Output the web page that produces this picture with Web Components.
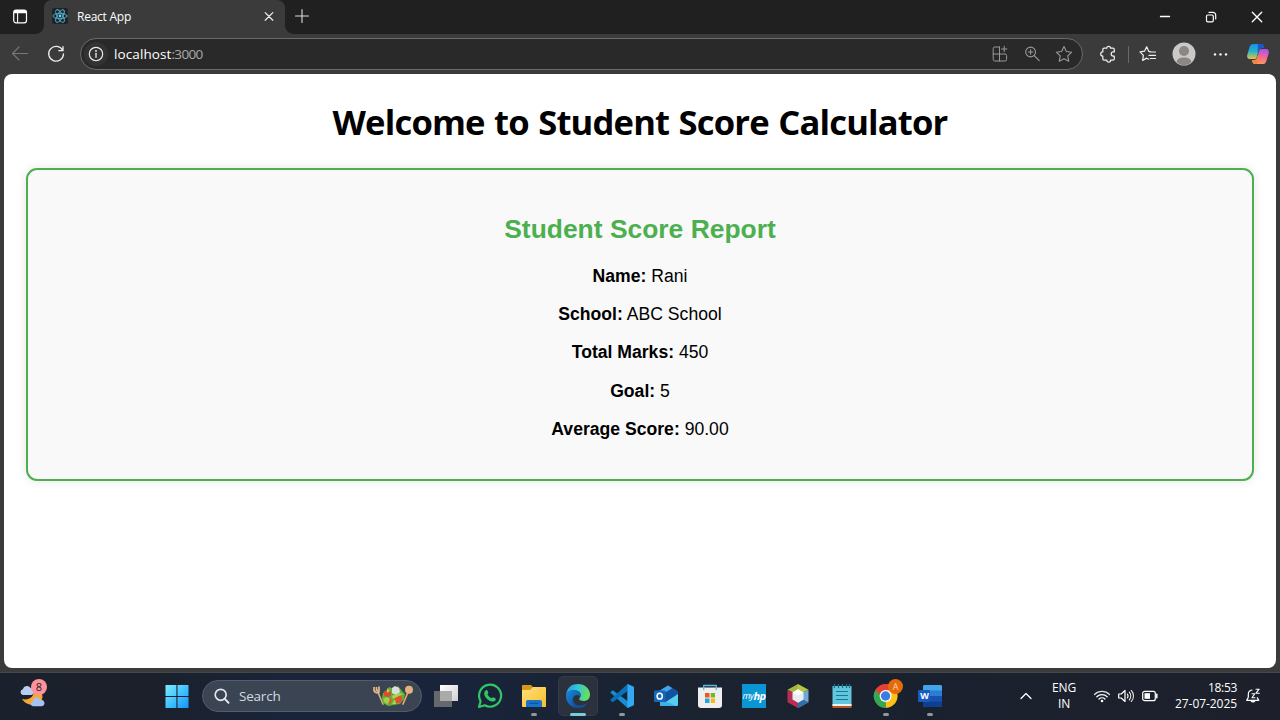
<!DOCTYPE html>
<html lang="en">
<head>
<meta charset="utf-8">
<title>React App</title>
<style>
html,body{margin:0;height:100%;overflow:hidden;background:#3b3b3b}
body{font-family:"Open Sans","Noto Sans",sans-serif}
</style>
</head>
<body>
<desktop-screen></desktop-screen>
<script>
const define = (name, html, setup) => customElements.define(name, class extends HTMLElement {
  connectedCallback() {
    if (this.shadowRoot) return;
    this.attachShadow({mode: "open"}).innerHTML = typeof html === "function" ? html(this) : html;
    if (setup) setup(this);
  }
});

const box = (s, body) => `<svg width="${s}" height="${s}" viewBox="0 0 ${s} ${s}" fill="none" stroke-linecap="round" stroke-linejoin="round">${body}</svg>`;
const star = "M10 2.6l2.35 4.9 5.35.7-3.9 3.75.95 5.35L10 14.7l-4.75 2.6.95-5.35L2.3 8.2l5.35-.7z";
const icons = {
  tabs: box(20, `<rect x="3.7" y="3" width="12.8" height="12.8" rx="2.3" stroke="#fff" stroke-width="1.2"/><path d="M4 4.8q0-1.8 2-1.8h8.3q2 0 2 1.8v1.5H4z" fill="#fff"/><path d="M7.6 6v9.5" stroke="#fff" stroke-width="1.1"/>`),
  react: box(16, `<rect width="16" height="16" rx="2" fill="#20232a"/><g stroke="#52b5cf" stroke-width=".9"><ellipse cx="8" cy="8" rx="7" ry="2.7"/><ellipse cx="8" cy="8" rx="7" ry="2.7" transform="rotate(60 8 8)"/><ellipse cx="8" cy="8" rx="7" ry="2.7" transform="rotate(120 8 8)"/></g><circle cx="8" cy="8" r="1.4" fill="#61dafb"/>`),
  close: box(10, `<path d="M1.2 1.6l7.6 7.6m0-7.6L1.2 9.2" stroke="#eee" stroke-width="1.25"/>`),
  plus: box(16, `<path d="M8 1.5v13M1.5 8h13" stroke="#ddd" stroke-width="1.1"/>`),
  min: box(12, `<path d="M1.5 5.5h9" stroke="#fff" stroke-width="1.3"/>`),
  restore: box(12, `<rect x="1.5" y="4" width="6.8" height="6.8" rx="1.3" stroke="#fff" stroke-width="1.2"/><path d="M4 1.3h4a2.7 2.7 0 0 1 2.7 2.7v4" stroke="#fff" stroke-width="1.2"/>`),
  wclose: box(12, `<path d="M1.3 1.3l9.4 9.4m0-9.4l-9.4 9.4" stroke="#fff" stroke-width="1.35"/>`),
  back: box(20, `<path d="M17.5 9.5H2.7M9 3L2.5 9.5 9 16" stroke="#777" stroke-width="1.1"/>`),
  reload: box(20, `<path d="M16.6 6.2A7.4 7.4 0 1 0 17.5 10M17 2.7v4h-4.2" stroke="#eee" stroke-width="1.3"/>`),
  info: box(28, `<circle cx="14" cy="14" r="12" fill="#333"/><circle cx="14" cy="14" r="6.7" stroke="#eee" stroke-width="1.15"/><path d="M14 13.3v4" stroke="#eee" stroke-width="1.3"/><circle cx="14" cy="11" r=".9" fill="#eee"/>`),
  apps: box(20, `<path d="M9.5 3H4.8A1.6 1.6 0 0 0 3.2 4.6v10.8A1.6 1.6 0 0 0 4.8 17H15a1.6 1.6 0 0 0 1.6-1.6v-3.8a1.6 1.6 0 0 0-1.6-1.6H3.2M9.5 3v14M14.2 2.3v5.4M11.5 5h5.4" stroke="#999" stroke-width="1"/>`),
  zoom: box(20, `<circle cx="8.6" cy="8" r="4.9" stroke="#999" stroke-width="1.1"/><path d="M12.2 11.6l5 5M8.6 5.8v4.4M6.4 8h4.4" stroke="#999" stroke-width="1.1"/>`),
  star: box(20, `<path d="${star}" stroke="#999" stroke-width="1.1"/>`),
  puzzle: box(20, `<path d="M6.2 4.2h2.6a1.9 1.9 0 0 1 3.8 0h2.3a1.4 1.4 0 0 1 1.4 1.4v2.3h-1a2 2 0 1 0 0 4.2h1v2.7a1.4 1.4 0 0 1-1.4 1.4h-2.3a1.9 1.9 0 0 1-3.8 0H6.2a1.4 1.4 0 0 1-1.4-1.4v-2.7a2.1 2.1 0 0 1 0-4.2V5.6a1.4 1.4 0 0 1 1.4-1.4z" stroke="#eee" stroke-width="1.25"/>`),
  favs: box(20, `<path d="M12.4 7.5h-1.6L8.7 2.7 6.5 7.2l-4.5.7 3.4 3.5-.8 5 4.2-2.3M12 8h5.5M11 11.4h6.5M12.3 14.5h5.2M8.7 14.2l2 1" stroke="#eee" stroke-width="1.2"/>`),
  person: box(24, `<circle cx="12" cy="12" r="11.5" fill="#cbc8c5"/><circle cx="12" cy="9" r="5" fill="#8a8785"/><path d="M4.7 20.6c0-3.5 2.5-5 7.3-5s7.3 1.5 7.3 5a11.5 11.5 0 0 1-14.6 0z" fill="#8a8785"/>`),
  dots: box(16, `<g fill="#fff"><circle cx="3" cy="8.4" r="1.2"/><circle cx="8.5" cy="8.4" r="1.2"/><circle cx="14" cy="8.4" r="1.2"/></g>`),
  copilot: box(24, `<defs><linearGradient id="a" x1="0" y1="0" x2="0" y2="1"><stop stop-color="#188eea"/><stop offset=".5" stop-color="#25b6c6"/><stop offset="1" stop-color="#e8c13f"/></linearGradient><linearGradient id="b" x1=".3" y1="0" x2=".2" y2="1"><stop stop-color="#a755ed"/><stop offset=".5" stop-color="#f46792"/><stop offset="1" stop-color="#ff9b55"/></linearGradient></defs><path d="M7 2h8c2 0 2.5 1.5 2.9 4h-2.3c-1.6 0-2.2.8-2.8 2.5l-2 6.5c-.5 1.7-1.3 2-3.2 2H4C1.5 17 .7 15 1.3 12.7l2.3-7.6C4.3 3 5.2 2 7 2z" fill="url(#a)"/><path d="M17 22H9c-2 0-2.5-1.5-2.9-4h2.3c1.6 0 2.2-.8 2.8-2.5l2-6.5c.5-1.7 1.3-2 3.2-2H20c2.5 0 3.3 2 2.7 4.3l-2.3 7.6C19.7 21 18.8 22 17 22z" fill="url(#b)"/><path d="M12 2h3c2 0 2.5 1.5 2.9 4h-2.3c-1.6 0-2.2.8-2.8 2.5L11.6 12z" fill="#1b57cf"/><path d="M6.1 18c.4 2.5.9 4 2.9 4h2l2.3-7-1.2-2-.9 2.5C10.6 17.2 10 18 8.4 18z" fill="#ef8743"/>`),
  weather: box(32, `<path d="M18 9c8 1 10 7 7.5 11.5S12 28 6 19c6 1.5 12.5-1 12-10z" fill="#f8a532"/><path d="M6.8 15a3 3 0 0 1 0-5.8A4.3 4.3 0 0 1 14.6 8a3.6 3.6 0 0 1 1 7z" fill="#b9cdf3"/><path d="M17 26.3a2.7 2.7 0 0 1 0-5.3 3.9 3.9 0 0 1 7.4-1.2 3.3 3.3 0 0 1 1.4 6.5z" fill="#a8c2ef"/>`),
  windows: box(26, `<defs><linearGradient id="w" gradientUnits="userSpaceOnUse" x1="1" y1="1" x2="25" y2="25"><stop stop-color="#80edff"/><stop offset=".5" stop-color="#42c5ff"/><stop offset="1" stop-color="#1591f6"/></linearGradient></defs><path d="M1.5 2h10.9v10.9H1.5zM13.5 2h11v10.9h-11zM1.5 14.1h10.9v11H1.5zM13.5 14.1h11v11h-11z" fill="url(#w)"/>`),
  search: box(20, `<circle cx="8.7" cy="8.8" r="5.5" stroke="#e1e5ed" stroke-width="1.7"/><path d="M12.8 12.9l3.7 3.8" stroke="#e1e5ed" stroke-width="2"/>`),
  salad: `<svg width="42" height="22" viewBox="0 0 42 22"><g stroke="#dca877" stroke-width="1.7" stroke-linecap="round"><path d="M5 5l6 14"/><path d="M37 5l-6 14"/></g><path d="M2 2v3.500q2 3.500 5 1.500V1.500M4.500 2v4" fill="none" stroke="#e6b88a" stroke-width="1.700"/><ellipse cx="37" cy="4.8" rx="4" ry="4" fill="#e4b27e"/><path d="M11 8l4-3 2-3 5 2 4-3 4 5 3 3-1 5-4 5-6 1-6 1-5-3-1-5z" fill="#62b334"/><circle cx="15.5" cy="8.5" r="3.6" fill="#dd4932"/><circle cx="26" cy="14" r="4.3" fill="#df5037"/><circle cx="17" cy="15.7" r="2.8" fill="#e2573b"/><path d="M20 3l3-2 4 2 1 4-4 3-4-2z" fill="#dedbe8"/><path d="M11 14l4-2 3 2-2 5-3-1z" fill="#9bd34b"/><path d="M20 11l7-3 4 1-4 2-6 3zM15 3l3 3-3 2zM20 19l3-5 1 5z" fill="#a6d84a"/></svg>`,
  task: box(28, `<defs><linearGradient id="t" x1="0" y1="0" x2="1" y2="1"><stop stop-color="#fff"/><stop offset="1" stop-color="#cfcfd2"/></linearGradient></defs><path d="M8 3h18v16H8z" fill="url(#t)"/><path d="M2 9h18v16H2z" fill="#777" opacity=".82"/><path d="M8 9h12v10H8z" fill="#aaa"/>`),
  whatsapp: box(28, `<path d="M3 25l1.6-5.8A11 11 0 1 1 8.8 23.3z" stroke="#30c765" stroke-width="2.2"/><path d="M10 8.2c.6-.5 1.2-.3 1.5.4l.8 1.9c.2.5 0 .8-.9 1.8 1 1.9 2.4 3.2 4.3 4 .7-.8 1-1.2 1.5-1l2.3 1.1c1 .7-.3 3.2-2.6 3.2-4.4 0-9-5.1-8.7-8.4.1-1.4.9-2.3 1.8-3z" fill="#30c765"/>`),
  folder: box(28, `<defs><linearGradient id="g" x1="0" y1="0" x2="1" y2="1"><stop stop-color="#ffe07a"/><stop offset="1" stop-color="#f8bd2c"/></linearGradient></defs><path d="M2 4c0-.7.5-1 1-1h8l2 2H12l-2 4H2z" fill="#d99816"/><path d="M2 8h8l2.5-3H25a1 1 0 0 1 1 1v19H3a1 1 0 0 1-1-1z" fill="url(#g)"/><path d="M6 25v-5c0-1.5 1-2 2-2h12c1.3 0 2 .7 2 2v5z" fill="#1874c8"/><path d="M9.8 21.3h8.5" stroke="#0a4f98"/>`),
  edge: box(28, `<defs><linearGradient id="e" x1="0" y1="0" x2="1" y2=".2"><stop stop-color="#2593df"/><stop offset=".5" stop-color="#33c4d4"/><stop offset="1" stop-color="#67df62"/></linearGradient><linearGradient id="f" x1="0" y1="0" x2="1" y2="1"><stop stop-color="#1688df"/><stop offset="1" stop-color="#104a8f"/></linearGradient></defs><path d="M2 13C3 5 8 2 14 2c7 0 12 5 12 10.5 0 4.5-3 6.5-6.7 6.5-3.1 0-4.9-1.3-3.7-2.9 2.9-3.9-.2-7.6-4.6-7.6C6.5 8.5 3 10 2 13z" fill="url(#e)"/><path d="M2 13c1-3.5 5-5.5 8.5-5 4.5.2 7.5 3.5 5.7 6.9-2-3-6-2.4-7 .9-1.2 4.5 2 9.5 7.5 9.7C9 27.5 1.2 21.5 2 13z" fill="url(#f)"/><path d="M9.5 15c-1.8 7 5.5 12 14.6 5.2C21.5 25 17 26.8 13.5 25.9 9 24.5 7 19 9.5 15z" fill="#164e9c"/>`),
  vscode: box(28, `<path d="M19.5 2L26 5v18l-6.5 3L2.3 10.6l2.5-2.3L19.5 19z" fill="#168ed1"/><path d="M19.5 2L2 18l2.8 2.2L19.5 9z" fill="#0872b7"/><path d="M19.5 2L26 5v18l-6.5 3z" fill="#32a9f2"/>`),
  outlook: box(28, `<path d="M7 9l9-5.5 10 6V13H7z" fill="#1763b7"/><path d="M7 9l9-5.5 4.500 2.700L11 12z" fill="#42a5e8"/><path d="M11 12l9.500-5.800L26 9.500V12L12 21z" fill="#14529f"/><path d="M8 23.500L26 12v10.500c0 1-.6 1.500-1.5 1.500H10c-1 0-2-.2-2-.5z" fill="#55cff0"/><path d="M8 20h4l5 .5L24.500 24H10c-1 0-2-.4-2-1z" fill="#3db2e8"/><rect x="2" y="8.500" width="11.500" height="11.500" rx="1" fill="#1568b8"/><ellipse cx="7.700" cy="14.200" rx="2.600" ry="2.900" stroke="#fff" stroke-width="1.500"/>`),
  store: box(28, `<path d="M2 5.500h24V23c0 2-1 3-3 3H5c-2 0-3-1-3-3z" fill="#eee"/><path d="M7.700 7.500V3.500h12.600v4" stroke="#56b9ee" stroke-width="1.300"/><path d="M9 11h4.500v4.500H9z" fill="#ef5525"/><path d="M14.700 11H19v4.500h-4.300z" fill="#7cb51b"/><path d="M9 16.500h4.500V21H9z" fill="#20a5df"/><path d="M14.700 16.500H19V21h-4.300z" fill="#f9b719"/>`),
  cube: box(28, `<path d="M14 2l10.5 5.8L14 13z" fill="#b7c73e"/><path d="M14 2L3.5 7.8 14 13z" fill="#a2b83e"/><path d="M3.5 7.8v12.4L14 26V13z" fill="#b62f52"/><path d="M24.5 7.8v12.4L14 26V13z" fill="#72a8d6"/><path d="M14 26l10.5-5.8-5-2.5-5.5 3z" fill="#326dab"/><path d="M14 7.3l5.5 3.2v7L14 20.7l-5.5-3.2v-7z" fill="#e9edf0"/><path d="M14 7.3l5.5 3.2L14 13.5l-5.5-3z" fill="#fff"/>`),
  note: box(28, `<path d="M4.5 4h19v20h-19z" fill="#62c7dc"/><path d="M4.5 23.7h19V26h-19z" fill="#b65a1c"/><path d="M4.5 22h19v2h-19z" fill="#e8f3f7"/><path d="M6.5 2.5v3m4-3v3m4-3v3m4-3v3m3-3v3" stroke="#126f87" stroke-width="1.3"/><path d="M8.5 9.5h11m-11 4h11m-11 4h11" stroke="#167992" stroke-width="1.2"/>`),
  chrome: box(28, `<path d="M13.5 14L3.3 8A12 12 0 0 1 24 8z" fill="#e44134"/><path d="M13.5 14L3.3 8a12 12 0 0 0 10.4 18z" fill="#35a952"/><path d="M13.5 14L24 8A12 12 0 0 1 13.7 26z" fill="#fbc116"/><path d="M13.5 8H24L19 17z" fill="#fbc116"/><path d="M3.3 8l5 9 5.5-9z" fill="#35a952"/><path d="M3.3 8A12 12 0 0 1 24 8H13.5L7 12z" fill="#e44134"/><circle cx="13.6" cy="14" r="6" fill="#fff"/><circle cx="13.6" cy="14" r="4.7" fill="#3c7de3"/>`),
  word: box(28, `<rect x="7" y="3" width="19" height="22" rx="1.5" fill="#2b7cd3"/><path d="M8.5 3h16q1.5 0 1.5 1.5V8.5H7v-4Q7 3 8.5 3z" fill="#41a5ee"/><path d="M7 14h19v6H7z" fill="#1852b0"/><path d="M7 19.500h19v4q0 1.500-1.500 1.500h-16Q7 25 7 23.500z" fill="#103f91"/><rect x="2" y="8" width="12" height="12" rx="1" fill="#185abd"/>`),
  up: box(14, `<path d="M3 9.5l5-5 5 5" stroke="#fff" stroke-width="1.3"/>`),
  wifi: box(18, `<g stroke="#fff" stroke-width="1.2"><path d="M1.5 7.5a10.5 10.5 0 0 1 15 0" stroke="#ddd"/><path d="M3.8 9.8a7.4 7.4 0 0 1 10.4 0"/><path d="M6 12a4.3 4.3 0 0 1 6 0"/></g><circle cx="9" cy="14" r="1.3" fill="#fff"/>`),
  sound: box(18, `<path d="M1.7 7h2.5L8 3.5v11L4.2 11H1.7z" stroke="#fff" stroke-width="1.2"/><path d="M10.3 7a3.2 3.2 0 0 1 0 4M12.3 5.2a5.8 5.8 0 0 1 0 7.6" stroke="#fff" stroke-width="1.1"/><path d="M14.3 3.5a8 8 0 0 1 0 11" stroke="#ddd" stroke-width="1.1"/>`),
  battery: box(18, `<rect x="1.7" y="4.3" width="12.6" height="9.4" rx="2" stroke="#fff" stroke-width="1.2"/><path d="M3.5 6.2h5.5v5.6H3.5z" fill="#fff"/><path d="M15.8 7.3v3.4" stroke="#fff" stroke-width="1.5"/>`),
  bell: box(18, `<path d="M8 3C5.5 3.3 4.3 5.2 4.3 7.5v2.8L2.7 13.4h12l-1.3-2.5M7 13.5a2.1 2.1 0 0 0 4 0" stroke="#fff" stroke-width="1.2"/><path d="M12 2.2h3.2L12 6.2h3.3M8 6.8h2.8L8 10.8h2.9" stroke="#fff" stroke-width="1.1"/>`)
};

define("app-icon", el => `<style>:host{display:flex;align-items:center;justify-content:center;flex:none}svg{display:block;flex:none}</style>${icons[el.getAttribute("name")]}`);

/* Single-line label whose tracking adapts to a given measure */
define("fit-text", `<style>:host{display:block;white-space:nowrap;flex:none}span{display:inline-block}</style><span><slot></slot></span>`, el => {
  const w = +el.getAttribute("measure"), s = el.shadowRoot.querySelector("span");
  const n = el.textContent.length;
  if (w) s.style.letterSpacing = (w - s.getBoundingClientRect().width) / n + "px";
});

define("tab-strip", `<style>
:host{display:flex;height:34px;background:#202020;align-items:stretch}
.tabs{width:40px}
.tab{position:relative;width:241px;margin-left:4px;box-sizing:border-box;background:#3b3b3b;border-radius:8px 8px 0 0;display:flex;align-items:center;padding:0 11px 2px 8px;color:#fff;font-size:12px}
.tab::before,.tab::after{content:"";position:absolute;bottom:0;width:8px;height:8px}
.tab::before{left:-8px;background:radial-gradient(circle at 0 0,transparent 7.5px,#3b3b3b 8px)}
.tab::after{right:-8px;background:radial-gradient(circle at 100% 0,transparent 7.5px,#3b3b3b 8px)}
fit-text{margin-left:9px}.x{margin-left:auto}.plus{width:33px;padding-bottom:2px}
.win{margin-left:auto;display:flex}.win app-icon{width:46px}
</style>
<app-icon class="tabs" name="tabs"></app-icon>
<div class="tab"><app-icon name="react"></app-icon><fit-text measure="54">React App</fit-text><app-icon class="x" name="close"></app-icon></div>
<app-icon class="plus" name="plus"></app-icon>
<div class="win"><app-icon name="min"></app-icon><app-icon name="restore"></app-icon><app-icon name="wclose"></app-icon></div>`);

define("address-bar", `<style>
:host{display:flex;height:40px;background:#3b3b3b;align-items:center}
.back{width:40px}.reload{width:32px}
.field{box-sizing:border-box;width:1003px;height:32px;margin-left:8px;border:1px solid #6b6b6b;border-radius:16px;background:#292929;display:flex;align-items:center;padding-left:1px;padding-right:2px;color:#fff;font-size:13.5px}
.url{display:flex;margin-left:4px}.port{color:#aaa}
.acts{margin-left:auto;display:flex}.acts app-icon{width:32px}
.puzzle{margin-left:15px}.sep{width:1px;height:17px;background:#686868;margin:0 9px 0 10px}
.person{margin-left:14px}.dots{margin-left:16px}.cop{margin-left:18px}
</style>
<app-icon class="back" name="back"></app-icon><app-icon class="reload" name="reload"></app-icon>
<div class="field"><app-icon name="info"></app-icon><div class="url"><fit-text measure="57.5">localhost</fit-text><fit-text class="port" measure="31">:3000</fit-text></div>
<div class="acts"><app-icon name="apps"></app-icon><app-icon name="zoom"></app-icon><app-icon name="star"></app-icon></div></div>
<app-icon class="puzzle" name="puzzle"></app-icon><span class="sep"></span><app-icon name="favs"></app-icon><app-icon class="person" name="person"></app-icon><app-icon class="dots" name="dots"></app-icon><app-icon class="cop" name="copilot"></app-icon>`);

define("score-row", `<style>:host{display:flex;justify-content:center;height:38.4px;font:17.6px/20px "Liberation Sans",Arial,sans-serif;white-space:pre}b{font-weight:700}</style><div><b><slot name="label"></slot></b> <slot></slot></div>`);

define("score-card", `<style>
:host{display:block;box-sizing:border-box;height:313px;border:2px solid #4caf50;border-radius:11px;background:#f9f9f9;box-shadow:0 0 11px rgba(0,0,0,.1);padding-top:43px}
h2{margin:0;height:52.5px;display:flex;justify-content:center;font:700 26.4px/32px "Liberation Sans",Arial,sans-serif;color:#4caf50}
</style><h2><fit-text measure="271.5">Student Score Report</fit-text></h2><slot></slot>`);

define("web-page", `<style>
:host{display:block;box-sizing:border-box;height:594px;margin:0 4px;background:#fff;border-radius:8px;padding:23px 22px 0;color:#000}
h1{margin:0;height:71px;display:flex;justify-content:center;font-size:34.6px;line-height:50px;font-weight:700;word-spacing:1.2px}
</style><h1><fit-text measure="615">Welcome to Student Score Calculator</fit-text></h1>
<score-card>
<score-row><span slot="label">Name:</span>Rani</score-row>
<score-row><span slot="label">School:</span>ABC School</score-row>
<score-row><span slot="label">Total Marks:</span>450</score-row>
<score-row><span slot="label">Goal:</span>5</score-row>
<score-row><span slot="label">Average Score:</span>90.00</score-row>
</score-card>`);

define("task-button", el => `<style>
:host{display:flex;position:relative;width:44px;height:48px;align-items:center;justify-content:center;flex:none}
.tile{display:flex;width:40px;height:40px;align-items:center;justify-content:center;border-radius:5px;box-sizing:border-box}
:host([active]) .tile{background:#2b323e;border:1px solid #343b47}
i{position:absolute;bottom:4px;left:19px;width:6px;height:3px;border-radius:2px;background:#92969d;display:none}
:host([open]) i,:host([active]) i{display:block}
:host([active]) i{left:14px;width:16px;background:#76cddc}
</style><div class="tile"><app-icon name="${el.getAttribute("icon")}"></app-icon></div><i></i><slot></slot>`);

define("task-bar", `<style>
:host{display:flex;height:48px;background:linear-gradient(90deg,#1b212c,#1b202b 12%,#19243a 22%,#19243a 36%,#1b2331 52%,#1a212e 72%,#1d202b);border-top:1px solid #464749;align-items:center;color:#fff;margin-top:4px;box-sizing:border-box}
.weather{position:relative;margin-left:16px}
.eight{position:absolute;left:15px;top:-1px;width:16px;height:16px;border-radius:50%;background:#ff929d;color:#222;font-size:11px;line-height:16px;text-align:center}
.win{margin-left:107px}
.search{box-sizing:border-box;width:220px;height:32px;border:1px solid #525c6a;border-radius:16px;background:#3b4452;display:flex;align-items:center;padding:0 7px 0 9px;margin:0 2px 0 3px;font-size:13.5px;color:#d4d9e1}
.search fit-text{margin-left:7px}.search app-icon:last-child{margin-left:auto}
.a{position:absolute;left:24px;top:7px;width:15px;height:15px;border-radius:50%;background:#e66a08;color:#f3d7bb;font-size:9px;line-height:15px;text-align:center}
.hp{position:absolute;left:10px;top:12px;width:24px;height:24px;background:#0a96d3;color:#fff;font:italic 9px/24px "Open Sans",sans-serif;letter-spacing:-.5px;display:flex;justify-content:center}
.hp b{font-size:11px}
.w{position:absolute;left:11px;top:16px;width:11px;font-size:9px;line-height:16px;font-weight:700;text-align:center}
.up{margin-left:66px}
.lang{width:26px;margin-left:19px;font-size:12px;line-height:16px;display:flex;flex-direction:column;align-items:center}
.status{display:flex;margin-left:16px;gap:6px}
.clock{font-size:12px;line-height:16px;margin-left:16px;width:62px;display:flex;flex-direction:column;align-items:flex-end}
.bell{margin-left:7px}
:host{padding-bottom:1px}
</style>
<div class="weather"><app-icon name="weather"></app-icon><div class="eight">8</div></div>
<task-button class="win" icon="windows"></task-button>
<div class="search"><app-icon name="search"></app-icon><fit-text measure="41.5">Search</fit-text><app-icon name="salad"></app-icon></div>
<task-button icon="task"></task-button><task-button icon="whatsapp"></task-button><task-button icon="folder" open></task-button><task-button icon="edge" active></task-button><task-button icon="vscode" open></task-button><task-button icon="outlook"></task-button><task-button icon="store"></task-button>
<task-button icon=""><div class="hp">my<b>hp</b></div></task-button>
<task-button icon="cube"></task-button><task-button icon="note"></task-button><task-button icon="chrome" open><div class="a">A</div></task-button><task-button icon="word" open><div class="w">W</div></task-button>
<app-icon class="up" name="up"></app-icon>
<div class="lang"><fit-text measure="24">ENG</fit-text><fit-text measure="12">IN</fit-text></div>
<div class="status"><app-icon name="wifi"></app-icon><app-icon name="sound"></app-icon><app-icon name="battery"></app-icon></div>
<div class="clock"><fit-text measure="29">18:53</fit-text><fit-text measure="62">27-07-2025</fit-text></div><app-icon class="bell" name="bell"></app-icon>`);

define("desktop-screen", `<style>:host{display:flex;flex-direction:column;width:1280px;height:720px;background:#3b3b3b;overflow:hidden}</style><tab-strip></tab-strip><address-bar></address-bar><web-page></web-page><task-bar></task-bar>`);
document.querySelector("desktop-screen").shadowRoot.querySelector("task-bar").shadowRoot.querySelectorAll('task-button[icon=""]').forEach(b => b.shadowRoot.querySelector(".tile").replaceChildren());
</script>
</body>
</html>
